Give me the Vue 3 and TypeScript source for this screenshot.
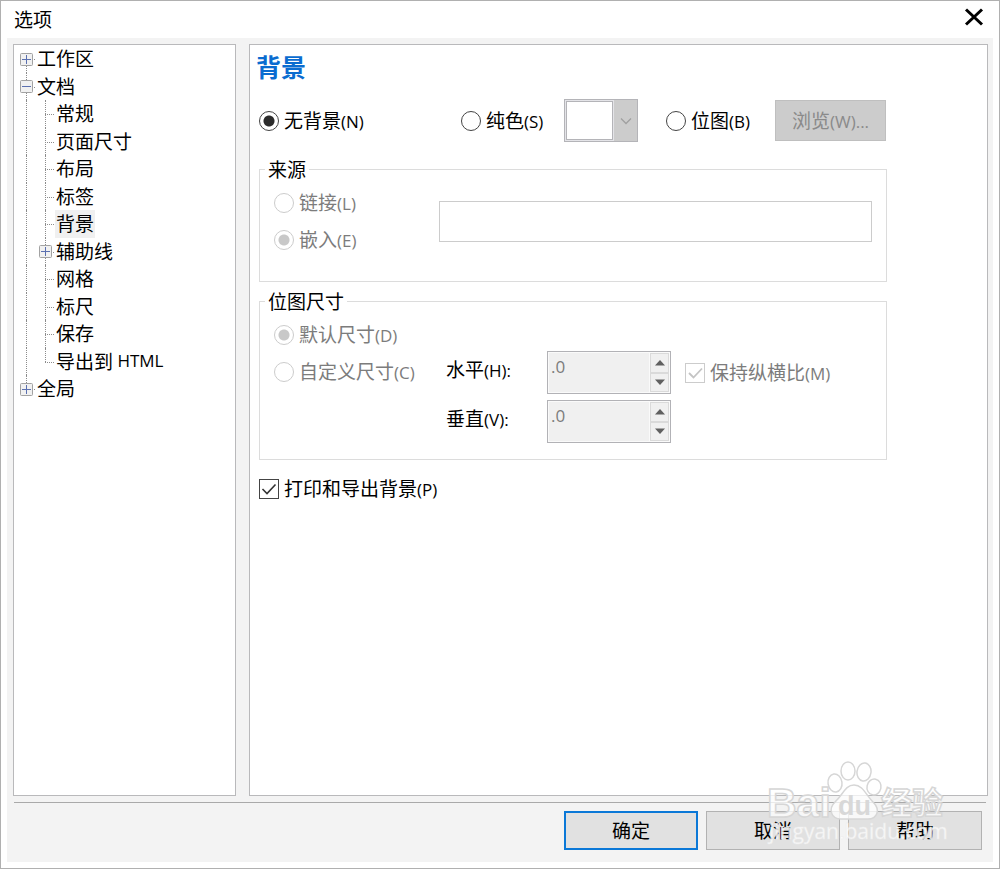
<script setup lang="ts">
import { ref } from 'vue'

interface TreeRow {
  label: string
  latin?: string
  level: 1 | 2
  toggle?: 'plus' | 'minus'
  first?: boolean
  last?: boolean
}

const rows: TreeRow[] = [
  { label: '工作区', level: 1, toggle: 'plus', first: true },
  { label: '文档', level: 1, toggle: 'minus' },
  { label: '常规', level: 2 },
  { label: '页面尺寸', level: 2 },
  { label: '布局', level: 2 },
  { label: '标签', level: 2 },
  { label: '背景', level: 2 },
  { label: '辅助线', level: 2, toggle: 'plus' },
  { label: '网格', level: 2 },
  { label: '标尺', level: 2 },
  { label: '保存', level: 2 },
  { label: '导出到', latin: 'HTML', level: 2, last: true },
  { label: '全局', level: 1, toggle: 'plus', last: true },
]

const selected = ref('背景')
const background = ref('none')
const source = ref('embed')
const sizeMode = ref('default')
const horizontal = ref('.0')
const vertical = ref('.0')
const keepRatio = ref(true)
const printBackground = ref(true)
</script>

<template>
  <div class="window">
    <header class="titlebar">
      <span class="title">选项</span>
      <button class="close" type="button" aria-label="关闭">
        <svg width="20" height="18" viewBox="0 0 20 18">
          <path d="M2 1.5 L18 16.5 M18 1.5 L2 16.5" fill="none" stroke="#000" stroke-width="3" />
        </svg>
      </button>
    </header>

    <div class="body">
      <div class="panels">
        <ul class="tree" role="tree">
          <li
            v-for="row in rows"
            :key="row.label"
            class="row"
            role="treeitem"
            :aria-level="row.level"
            :aria-selected="row.label === selected"
            @click="selected = row.label"
          >
            <span
              class="guide"
              :class="{ first: row.first, last: row.last && row.level === 1, branch: row.level === 1 }"
            >
              <svg v-if="row.level === 1 && row.toggle" class="toggle" width="13" height="13" viewBox="0 0 13 13">
                <rect x="0.5" y="0.5" width="12" height="12" rx="1" fill="#f1f1f1" stroke="#a2a2a2" />
                <path :d="row.toggle === 'plus' ? 'M2 6.5H11M6.5 2V11' : 'M2 6.5H11'" stroke="#5b70b0" />
              </svg>
            </span>
            <span v-if="row.level === 2" class="guide branch" :class="{ last: row.last }">
              <svg v-if="row.toggle" class="toggle" width="13" height="13" viewBox="0 0 13 13">
                <rect x="0.5" y="0.5" width="12" height="12" rx="1" fill="#f1f1f1" stroke="#a2a2a2" />
                <path d="M2 6.5H11M6.5 2V11" stroke="#5b70b0" />
              </svg>
            </span>
            <span class="name" :class="{ selected: row.label === selected }">{{ row.label
              }}<span v-if="row.latin" class="latin">&nbsp;{{ row.latin }}</span></span>
          </li>
        </ul>

        <main class="page">
          <h1>背景</h1>
          <div class="form">
            <div class="modes">
              <label class="choice mode-none">
                <input v-model="background" type="radio" name="background" value="none" />
                <span>无背景<span class="latin">(N)</span></span>
              </label>
              <label class="choice mode-solid">
                <input v-model="background" type="radio" name="background" value="solid" />
                <span>纯色<span class="latin">(S)</span></span>
              </label>
              <div class="combo">
                <span class="swatch"></span>
                <span class="arrow">
                  <svg width="12" height="8" viewBox="0 0 12 8">
                    <path d="M1 1.5 L6 6.5 L11 1.5" fill="none" stroke="#a0a0a0" stroke-width="1.3" />
                  </svg>
                </span>
                <select disabled aria-label="纯色"></select>
              </div>
              <label class="choice mode-bitmap">
                <input v-model="background" type="radio" name="background" value="bitmap" />
                <span>位图<span class="latin">(B)</span></span>
              </label>
              <button class="browse" type="button" disabled>浏览<span class="latin">(W)...</span></button>
            </div>

            <fieldset class="source">
              <legend>来源</legend>
              <div class="inner">
                <div class="stack">
                  <label class="choice off">
                    <input v-model="source" type="radio" name="source" value="link" disabled />
                    <span>链接<span class="latin">(L)</span></span>
                  </label>
                  <label class="choice off">
                    <input v-model="source" type="radio" name="source" value="embed" disabled />
                    <span>嵌入<span class="latin">(E)</span></span>
                  </label>
                </div>
                <input class="path" type="text" disabled aria-label="来源" />
              </div>
            </fieldset>

            <fieldset class="size">
              <legend>位图尺寸</legend>
              <div class="inner">
                <div class="stack">
                  <label class="choice off">
                    <input v-model="sizeMode" type="radio" name="size" value="default" disabled />
                    <span>默认尺寸<span class="latin">(D)</span></span>
                  </label>
                  <label class="choice off">
                    <input v-model="sizeMode" type="radio" name="size" value="custom" disabled />
                    <span>自定义尺寸<span class="latin">(C)</span></span>
                  </label>
                </div>
                <div class="dims">
                  <label class="axis" for="horizontal">水平<span class="latin">(H):</span></label>
                  <div class="spin">
                    <input id="horizontal" v-model="horizontal" type="text" disabled />
                    <div class="steps">
                      <button type="button" disabled aria-label="增加水平">
                        <svg width="10" height="6" viewBox="0 0 10 6"><path d="M5 0 L10 5.5 H0 Z" fill="#606060" /></svg>
                      </button>
                      <button type="button" disabled aria-label="减少水平">
                        <svg width="10" height="6" viewBox="0 0 10 6"><path d="M0 0.5 H10 L5 6 Z" fill="#606060" /></svg>
                      </button>
                    </div>
                  </div>
                  <label class="choice off ratio">
                    <input v-model="keepRatio" type="checkbox" disabled />
                    <svg class="tick" width="20" height="20" viewBox="0 0 20 20">
                      <path d="M4 10 L8.5 14.5 L17 5.5" fill="none" stroke="#c4c4c4" stroke-width="1.8" />
                    </svg>
                    <span>保持纵横比<span class="latin">(M)</span></span>
                  </label>
                  <label class="axis" for="vertical">垂直<span class="latin">(V):</span></label>
                  <div class="spin">
                    <input id="vertical" v-model="vertical" type="text" disabled />
                    <div class="steps">
                      <button type="button" disabled aria-label="增加垂直">
                        <svg width="10" height="6" viewBox="0 0 10 6"><path d="M5 0 L10 5.5 H0 Z" fill="#606060" /></svg>
                      </button>
                      <button type="button" disabled aria-label="减少垂直">
                        <svg width="10" height="6" viewBox="0 0 10 6"><path d="M0 0.5 H10 L5 6 Z" fill="#606060" /></svg>
                      </button>
                    </div>
                  </div>
                </div>
              </div>
            </fieldset>

            <label class="choice print">
              <input v-model="printBackground" type="checkbox" />
              <svg v-if="printBackground" class="tick" width="20" height="20" viewBox="0 0 20 20">
                <path d="M3.5 10 L8 14.5 L16.5 5.5" fill="none" stroke="#333" stroke-width="1.6" />
              </svg>
              <span>打印和导出背景<span class="latin">(P)</span></span>
            </label>
          </div>
        </main>
      </div>

      <footer class="actions">
        <button class="action primary" type="button">确定</button>
        <button class="action" type="button">取消</button>
        <button class="action" type="button">帮助</button>
      </footer>
    </div>

    <svg class="watermark" width="184" height="92" viewBox="0 0 184 92" aria-hidden="true">
      <g fill="#fff" fill-opacity="0.75" stroke="#d6d6d6" stroke-width="1.5">
        <ellipse cx="68" cy="25" rx="7" ry="9" transform="rotate(-8 68 25)" />
        <ellipse cx="81" cy="13" rx="7" ry="9" />
        <ellipse cx="97" cy="14" rx="7" ry="9" transform="rotate(8 97 14)" />
        <ellipse cx="107" cy="29" rx="7" ry="8" transform="rotate(12 107 29)" />
        <path d="M87 27 C96 27 99 37 106 44 C114 52 110 61 101 61 H74 C64 61 61 51 68 44 C76 37 78 27 87 27 Z" />
        <text class="brand" x="0" y="59">Bai</text>
        <text class="brand-cn" x="114" y="56">经验</text>
      </g>
      <text class="brand-du" x="71" y="57">du</text>
      <text class="site" x="2" y="81">jingyan.baidu.com</text>
    </svg>
  </div>
</template>

<style>
body {
  margin: 0;
  background: #fff;
}
</style>

<style scoped>
.window {
  position: relative;
  box-sizing: border-box;
  display: flex;
  flex-direction: column;
  min-height: 100vh;
  padding: 0 6px 6px;
  border: 1px solid #b0b0b0;
  background: #fff;
  color: #000;
  font-family: "Noto Sans CJK SC", sans-serif;
  font-size: 19px;
  line-height: 24px;
}

.window * {
  box-sizing: border-box;
}

button,
input,
select {
  margin: 0;
  padding: 0;
  font: inherit;
  color: inherit;
}

.latin {
  font-family: "Open Sans", "Noto Sans", sans-serif;
  font-size: 17px;
}

.titlebar {
  display: flex;
  align-items: center;
  justify-content: space-between;
  height: 37px;
  padding: 0 7px 2px;
}

.close {
  display: grid;
  place-items: center;
  width: 24px;
  height: 24px;
  margin-bottom: 4px;
  border: 0;
  background: none;
}

.body {
  flex: 1;
  display: flex;
  flex-direction: column;
  padding: 6px 5px 12px 6px;
  background: #f3f3f3;
}

.panels {
  flex: 1;
  display: flex;
  gap: 13px;
}

.tree {
  flex: none;
  width: 223px;
  margin: 0;
  padding: 0 0 0 3px;
  list-style: none;
  border: 1px solid #b9b9bb;
  background: #fff;
}

.row {
  display: flex;
  height: 28px;
}

.row:nth-child(even) {
  height: 27px;
}

.guide {
  position: relative;
  flex: none;
  display: grid;
  place-items: center;
  width: 19px;
}

.guide::before {
  content: "";
  position: absolute;
  top: 0;
  bottom: 0;
  left: 9px;
  border-left: 1px dotted #8c8c8c;
}

.guide.first::before {
  top: 50%;
}

.guide.last::before {
  bottom: 50%;
}

.guide.branch::after {
  content: "";
  position: absolute;
  top: 50%;
  left: 9px;
  right: 1px;
  border-top: 1px dotted #8c8c8c;
}

.toggle {
  position: relative;
  z-index: 1;
}

.name {
  display: flex;
  align-items: center;
  padding: 0 1px 2px;
  white-space: nowrap;
}

.name.selected {
  background: #f0f0f0;
}

.page {
  flex: 1;
  padding: 5px 9px;
  border: 1px solid #b9b9bb;
  background: #fff;
}

h1 {
  margin: 0 -3px 17px;
  color: #0a6cd0;
  font-size: 25px;
  font-weight: 700;
  line-height: 32px;
}

.form {
  max-width: 628px;
}

.modes {
  display: flex;
  align-items: center;
  height: 43px;
  margin-bottom: 15px;
}

.choice {
  position: relative;
  display: flex;
  align-items: center;
  gap: 5px;
  width: max-content;
  height: 24px;
  white-space: nowrap;
}

.choice input {
  appearance: none;
  flex: none;
  width: 20px;
  height: 20px;
  border: 1px solid #444;
  background: #fff;
}

.choice input[type="radio"] {
  border-radius: 50%;
}

.choice input[type="radio"]:checked {
  background: radial-gradient(circle, #2b2b2b 5px, #fff 6px);
}

.choice.off {
  color: #7c7c7c;
}

.choice.off input {
  border-color: #ccc;
}

.choice.off input[type="radio"]:checked {
  background: radial-gradient(circle, #c8c8c8 5px, #fff 6px);
}

.tick {
  position: absolute;
  left: 0;
  top: 2px;
  pointer-events: none;
}

.mode-none {
  width: 202px;
}

.mode-solid {
  width: 103px;
}

.mode-bitmap {
  width: 109px;
  margin-left: 28px;
}

.combo {
  position: relative;
  display: flex;
  width: 74px;
  height: 43px;
  border: 1px solid #b4b4b8;
  background: #ccc;
}

.swatch {
  width: 49px;
  border: 1px solid #e4e4e8;
  background: #fff;
  box-shadow: inset 0 0 0 1px #b4b4b8;
}

.arrow {
  flex: 1;
  display: grid;
  place-items: center;
}

.combo select {
  position: absolute;
  inset: 0;
  width: 100%;
  height: 100%;
  opacity: 0;
}

.browse {
  width: 111px;
  height: 41px;
  border: 1px solid #bfbfbf;
  background: #ccc;
  color: #8a8a8a;
}

fieldset {
  min-width: 0;
  margin: 0;
  padding: 0 5px;
  border: 1px solid #dcdcdc;
}

legend {
  padding: 0 3px;
}

.inner {
  display: flex;
  padding: 10px 9px 0;
}

.stack {
  flex: none;
  display: flex;
  flex-direction: column;
  gap: 13px;
}

.source {
  margin-bottom: 7px;
}

.source .inner {
  align-items: center;
  padding-bottom: 29px;
}

.source .stack {
  width: 165px;
}

.path {
  flex: 1;
  min-width: 0;
  height: 41px;
  border: 1px solid #ccc;
  background: #fff;
}

.size .inner {
  padding-bottom: 16px;
}

.size .stack {
  width: 172px;
}

.dims {
  display: grid;
  grid-template-columns: 101px 124px auto;
  align-items: center;
  row-gap: 6px;
  padding-top: 28px;
}

.axis {
  padding-bottom: 5px;
}

.ratio {
  margin-left: 14px;
}

.spin {
  display: flex;
  height: 43px;
  padding: 1px;
  border: 1px solid #b2b2b6;
  background: #fafafa;
}

.spin input {
  flex: 1;
  min-width: 0;
  padding: 0 2px 12px;
  border: 0;
  background: #f0f0f0;
  color: #7c7c7c;
  font-family: "Open Sans", "Noto Sans", sans-serif;
  font-size: 17px;
}

.steps {
  display: flex;
  flex-direction: column;
  width: 19px;
  margin-left: 1px;
}

.steps button {
  flex: 1;
  display: grid;
  place-items: center;
  border: 1px solid #dadada;
  background: #f0f0f0;
}

.print {
  margin-top: 17px;
}

.actions {
  display: flex;
  justify-content: flex-end;
  gap: 8px;
  margin: 6px 2px 0 1px;
  padding: 8px 4px 0;
  border-top: 1px solid #a9a9a9;
}

.action {
  width: 134px;
  height: 39px;
  padding-bottom: 2px;
  border: 1px solid #b2b2b2;
  background: #e1e1e1;
}

.action.primary {
  border: 2px solid #0b78d7;
}

.watermark {
  position: absolute;
  right: 48px;
  bottom: 18px;
  pointer-events: none;
}

.brand,
.brand-du {
  font-family: "Liberation Sans", sans-serif;
  font-weight: 700;
}

.brand {
  font-size: 41px;
}

.brand-du {
  font-size: 27px;
  fill: #d8d8d8;
}

.brand-cn {
  font-size: 31px;
  font-weight: 700;
}

.site {
  font-family: "Open Sans", sans-serif;
  font-size: 21px;
  fill: #fff;
  fill-opacity: 0.8;
  stroke: #ececec;
  stroke-width: 0.5;
}
</style>
